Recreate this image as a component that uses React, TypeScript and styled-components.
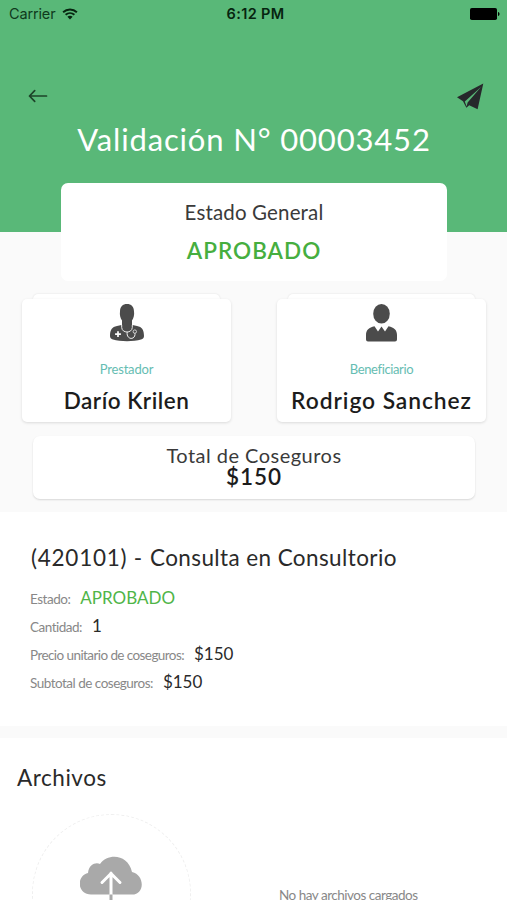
import React from 'react';
import styled, { createGlobalStyle } from 'styled-components';

const GlobalStyle = createGlobalStyle`
  * { box-sizing: border-box; }
  html, body { margin: 0; overflow: hidden; }
  body { font-family: Lato, sans-serif; background: #fafafa; color: #222; }
`;

const Screen = styled.main`
  width: 507px;
  height: 900px;
  overflow: hidden;
  background: #fafafa;
`;

const Text = styled.div<{ $size: number; $line: number; $track?: number; $weight?: number; $color?: string }>`
  margin: 0;
  font-size: ${(p) => p.$size}px;
  line-height: ${(p) => p.$line}px;
  letter-spacing: ${(p) => p.$track ?? 0}px;
  font-weight: ${(p) => p.$weight ?? 400};
  color: ${(p) => p.$color ?? '#2a2a2a'};
  white-space: nowrap;
`;

const Header = styled.header`
  height: 232px;
  background: #59b878;
`;

const StatusBar = styled.div`
  height: 28px;
  display: grid;
  grid-template-columns: 1fr auto 1fr;
  align-items: center;
  padding: 0 7px 0 9px;
  font-family: Inter, sans-serif;
`;

const Carrier = styled.div`
  display: flex;
  align-items: center;
  gap: 7px;
  padding-bottom: 1px;
`;

const Clock = styled.div`
  padding-left: 2px;
`;

const BatterySlot = styled.div`
  display: flex;
  justify-content: flex-end;
`;

const Toolbar = styled.nav`
  height: 91px;
  padding: 54px 23px 0 28px;
  display: flex;
  justify-content: space-between;
`;

const IconButton = styled.button<{ $drop?: number }>`
  display: flex;
  align-items: flex-start;
  height: 28px;
  padding: ${(p) => p.$drop ?? 0}px 0 0;
  border: 0;
  background: none;
`;

const Title = styled.h1`
  margin: 0;
  padding-left: 1px;
  text-align: center;
  font-size: 31px;
  font-weight: 400;
  line-height: 41px;
  letter-spacing: 0.84px;
  color: #fff;
`;

const StatusCard = styled.section`
  position: relative;
  width: 386px;
  height: 98px;
  margin: -49px 0 0 61px;
  padding-top: 15px;
  display: flex;
  flex-direction: column;
  align-items: center;
  gap: 10px;
  border-radius: 7px;
  background: #fff;
`;

const People = styled.section`
  display: grid;
  grid-template-columns: 209px 209px;
  gap: 46px;
  padding: 13px 22px 0;
`;

const Person = styled.article`
  display: flex;
  flex-direction: column;
  align-items: center;
`;

const CardEdge = styled.div`
  width: 187px;
  height: 5px;
  border-radius: 5px 5px 0 0;
  background: #fff;
  box-shadow: 0 0 2px rgba(0, 0, 0, 0.12);
`;

const PersonCard = styled.div`
  position: relative;
  width: 100%;
  height: 123px;
  padding-top: 3px;
  display: flex;
  flex-direction: column;
  align-items: center;
  border-radius: 5px;
  background: #fff;
  box-shadow: 0 1px 3px rgba(0, 0, 0, 0.13);
`;

const Portrait = styled.div`
  height: 58px;
  padding-top: 2px;
`;

const TotalCard = styled.section`
  width: 442px;
  height: 63px;
  margin: 14px 0 0 33px;
  padding-top: 8px;
  display: flex;
  flex-direction: column;
  align-items: center;
  border-radius: 7px;
  background: #fff;
  box-shadow: 0 1px 2px rgba(0, 0, 0, 0.14);
`;

const Detail = styled.section`
  height: 214px;
  margin-top: 13px;
  padding: 31px 30px 0;
  background: #fff;
`;

const Heading = styled.div`
  display: flex;
  gap: 7px;
  padding-left: 1px;
`;

const Fields = styled.dl`
  margin: 10px 0 0;
`;

const Field = styled.div`
  height: 28px;
  display: flex;
  align-items: baseline;
  gap: 10px;
`;

const Files = styled.section`
  height: 170px;
  margin-top: 12px;
  padding: 25px 0 0 17px;
  background: #fff;
`;

const FilesRow = styled.div`
  display: flex;
  gap: 88px;
  padding: 21px 0 0 15px;
`;

const UploadCircle = styled.div`
  flex: none;
  width: 159px;
  height: 159px;
  padding: 41px 2px 0 0;
  display: flex;
  justify-content: center;
  border: 1px dashed #efefef;
  border-radius: 50%;
`;

const EmptyNote = styled.div`
  padding-top: 71px;
`;

const fields = [
  { label: 'Estado:', value: 'APROBADO', track: -0.48, color: '#4fb548' },
  { label: 'Cantidad:', value: '1', track: -0.5 },
  { label: 'Precio unitario de coseguros:', value: '$150', track: -0.58 },
  { label: 'Subtotal de coseguros:', value: '$150', track: -0.5 },
];

const Wifi = () => (
  <svg width="16" height="12" viewBox="0 0 16 12" fill="none" stroke="#06240f" strokeWidth="1.9">
    <path d="M1.1 4.2C5 .5 11 .5 14.9 4.2M3.6 6.8C6.2 4.5 9.8 4.5 12.4 6.8" />
    <path d="M8 11.4 5.4 8.8C6.9 7.5 9.1 7.5 10.6 8.8Z" fill="#06240f" stroke="none" />
  </svg>
);

const Battery = () => (
  <svg width="30" height="12" viewBox="0 0 30 12" fill="#000">
    <rect width="27" height="12" rx="1.8" />
    <path d="M28 4c2 .6 2 3.4 0 4Z" />
  </svg>
);

const BackArrow = () => (
  <svg width="20" height="14" viewBox="0 0 20 14" fill="none" stroke="#1d4329" strokeWidth="1.7" strokeLinecap="round" strokeLinejoin="round">
    <path d="M18.5 7H1.5M6.7 1.7 1.5 7 6.7 12.3" />
  </svg>
);

const PaperPlane = () => (
  <svg width="27" height="27" viewBox="0 0 27 27">
    <path d="M26.3.5 0 14.3 6 18.2 9.4 24.8 12.2 22.2 20.6 26.2Z" fill="#26282b" />
    <path d="M24 4 7.8 18.4 9.6 23.6 10.6 19.6Z" fill="#59b878" />
  </svg>
);

const Doctor = () => (
  <svg width="34" height="38" viewBox="0 0 34 38">
    <path d="M0 32C0 26 2 22.8 7 22L11.5 21H22.5L27 22C32 22.8 34 26 34 32Q34 34.8 31 35.5C24 37.8 10 37.8 3 35.5Q0 34.8 0 32Z" fill="#4b4b4b" />
    <path d="M10 7.5C10 2.6 12.8 0 17 0S24 2.6 24 7.5C24.6 11 23.5 14.5 22 16.5V23C22 29.5 12 29.5 12 23V16.5C10.5 14.5 9.4 11 10 7.5Z" fill="#4b4b4b" />
    <path d="M11.7 21V23.5C12 29.5 22 29.5 22.3 23.5V21M17.2 28C16 35.5 24.5 36.5 25 30.5C25 29 24 28 23.5 27.5" fill="none" stroke="#eee" strokeWidth="1" />
    <circle cx="24.8" cy="27.6" r="1.7" fill="#4b4b4b" stroke="#ddd" strokeWidth=".9" />
    <path d="M8 27.3V33.1M5.1 30.2H10.9" stroke="#fff" strokeWidth="1.7" />
  </svg>
);

const Member = () => (
  <svg width="31" height="38" viewBox="0 0 31 38" fill="#4b4b4b">
    <ellipse cx="15.5" cy="9.8" rx="8.3" ry="9.8" />
    <path d="M8.5 22.3 12 27.5 15.5 22.5 19 27.5 22.5 22.3C28 23.5 31 26 31 31V35.5Q31 37.5 29 37.5H2Q0 37.5 0 35.5V31C0 26 3 23.5 8.5 22.3Z" />
  </svg>
);

const CloudUpload = () => (
  <svg width="62" height="54" viewBox="0 0 62 54">
    <path d="M11 38.5C-3 38.5-4 20 8 17C9 8 16 6 20 8C28-3 48-2 52 16C65 19 65 38.5 52 38.5Z" fill="#a9a9a9" />
    <path d="M31 38.5V17M22 26.5 31 17.5 40 26.5" fill="none" stroke="#fff" strokeWidth="3" strokeLinecap="round" strokeLinejoin="round" />
    <path d="M31 38.5V54" stroke="#a9a9a9" strokeWidth="3" />
  </svg>
);

export default function App() {
  return (
    <>
      <GlobalStyle />
      <Screen>
        <Header>
          <StatusBar>
            <Carrier>
              <Text $size={14.5} $line={18} $track={-0.15} $color="#0f3a1c">Carrier</Text>
              <Wifi />
            </Carrier>
            <Clock>
              <Text $size={14.5} $line={18} $weight={600} $track={0.35} $color="#06240f">6:12 PM</Text>
            </Clock>
            <BatterySlot><Battery /></BatterySlot>
          </StatusBar>
          <Toolbar>
            <IconButton $drop={7} aria-label="Volver"><BackArrow /></IconButton>
            <IconButton $drop={1} aria-label="Enviar"><PaperPlane /></IconButton>
          </Toolbar>
          <Title>Validación N° 00003452</Title>
        </Header>
        <StatusCard>
          <Text $size={20.5} $line={28} $track={0.15} $color="#3a3a3a">Estado General</Text>
          <Text $size={22.5} $line={30} $track={1.02} $weight={600} $color="#46ae3f">APROBADO</Text>
        </StatusCard>
        <People>
          <Person>
            <CardEdge />
            <PersonCard>
              <Portrait><Doctor /></Portrait>
              <Text $size={13} $line={20} $track={-0.2} $color="#66bdb2">Prestador</Text>
              <Text $size={22.5} $line={43} $track={0.5} $weight={600} $color="#1c1c1c">Darío Krilen</Text>
            </PersonCard>
          </Person>
          <Person>
            <CardEdge />
            <PersonCard>
              <Portrait><Member /></Portrait>
              <Text $size={13} $line={20} $track={-0.38} $color="#66bdb2">Beneficiario</Text>
              <Text $size={22.8} $line={43} $track={0.93} $weight={600} $color="#1c1c1c">Rodrigo Sanchez</Text>
            </PersonCard>
          </Person>
        </People>
        <TotalCard>
          <Text $size={20} $line={22} $track={0.48} $color="#3a3a3a">Total de Coseguros</Text>
          <Text $size={22.5} $line={22} $track={0.9} $weight={600} $color="#1c1c1c">$150</Text>
        </TotalCard>
        <Detail>
          <Heading>
            <Text $size={22.5} $line={30} $track={0.75}>(420101) -</Text>
            <Text $size={22.5} $line={30} $track={0.4}>Consulta en Consultorio</Text>
          </Heading>
          <Fields>
            {fields.map((f) => (
              <Field key={f.label}>
                <Text as="dt" $size={13.5} $line={28} $track={f.track} $color="#888">{f.label}</Text>
                <Text as="dd" $size={17} $line={30} $color={f.color}>{f.value}</Text>
              </Field>
            ))}
          </Fields>
        </Detail>
        <Files>
          <Text $size={22.5} $line={30} $track={0.55}>Archivos</Text>
          <FilesRow>
            <UploadCircle><CloudUpload /></UploadCircle>
            <EmptyNote>
              <Text $size={13.5} $line={20} $track={-0.49} $color="#888">No hay archivos cargados</Text>
            </EmptyNote>
          </FilesRow>
        </Files>
      </Screen>
    </>
  );
}
